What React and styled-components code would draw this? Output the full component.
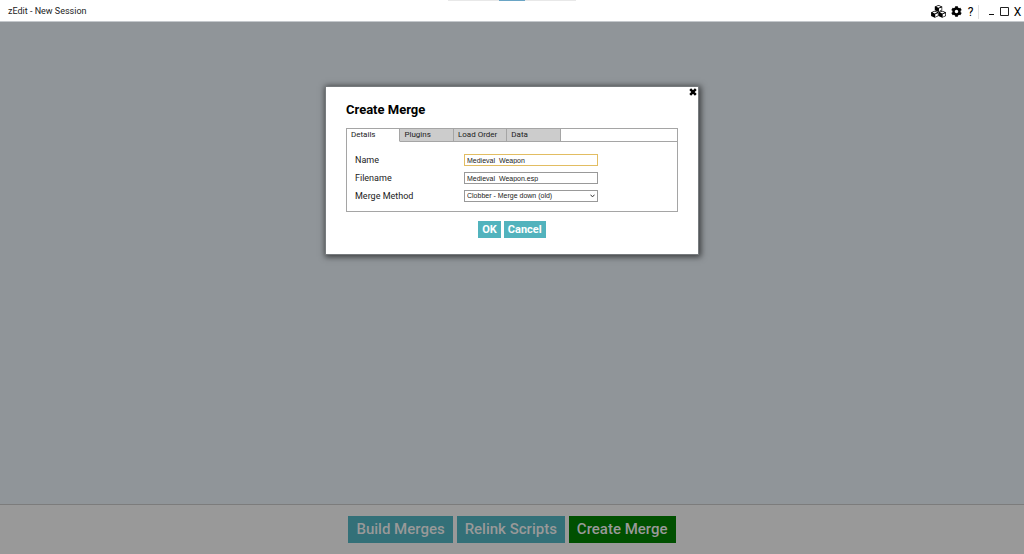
import React from "react";
import styled, { createGlobalStyle, css } from "styled-components";
import { FaCog } from "react-icons/fa";

const GlobalStyle = createGlobalStyle`
  *, *::before, *::after { box-sizing: border-box; }
  body { margin: 0; }
  body, button, input, select { font-family: Roboto, "Liberation Sans", sans-serif; }
`;

const Page = styled.div`
  min-height: 100vh;
  display: flex;
  flex-direction: column;
  background: #909599;
  color: #222;
`;

const TitleBar = styled.header`
  position: relative;
  display: flex;
  align-items: center;
  justify-content: space-between;
  height: 22px;
  padding: 0 0 0 8px;
  background: #fff;
  border-bottom: 1px solid #c4c8cc;
`;

const Title = styled.h1`
  margin: 0;
  font-size: 9px;
  line-height: 12px;
  font-weight: 400;
`;

const ProgressTrack = styled.div`
  position: absolute;
  top: 0;
  left: 50%;
  width: 128px;
  height: 1px;
  margin-left: -64px;
  background: #e8e8e8;
`;

const ProgressFill = styled.div`
  width: 26px;
  height: 1px;
  margin: 0 auto;
  background: #6aa5c5;
`;

const Actions = styled.nav`
  display: flex;
  align-items: center;
  padding-top: 2px;
`;

const IconButton = styled.button`
  display: flex;
  align-items: center;
  justify-content: center;
  width: ${(p) => p.$width || 13}px;
  height: 20px;
  padding: 0;
  border: 0;
  background: none;
  color: #000;
  font-size: 12px;
  line-height: 20px;
`;

const Divider = styled.span`
  width: 1px;
  height: 14px;
  margin: 0 6px 0 1px;
  background: #e2e2e2;
`;

const Workspace = styled.main`
  flex: 1;
  display: flex;
  justify-content: center;
  align-items: flex-start;
  padding: 64px 16px;
`;

const Modal = styled.section`
  position: relative;
  width: 374px;
  padding: 15px 20px 16px;
  background: #fff;
  border: 1px solid #777b7e;
  box-shadow: 1px 1px 6px 1px rgba(0, 0, 0, 0.6);
`;

const CloseButton = styled.button`
  position: absolute;
  top: 0;
  right: 0;
  display: flex;
  align-items: center;
  justify-content: center;
  width: 11px;
  height: 10px;
  padding: 0;
  border: 0;
  background: none;
  color: #000;
`;

const Heading = styled.h2`
  margin: 0 0 10px;
  font-size: 13px;
  line-height: 16px;
  font-weight: 700;
  color: #000;
`;

const TabPanel = styled.div`
  border: 1px solid #a5a5a5;
`;

const TabList = styled.div`
  display: grid;
  grid-template-columns: repeat(4, 16.2%) 1fr;
  height: 13px;
`;

const Tab = styled.button`
  padding: 0 0 0 4px;
  border: 0;
  border-right: 1px solid #a5a5a5;
  border-bottom: 1px solid #a5a5a5;
  background: #ccc;
  color: #222;
  font-size: 8px;
  line-height: 12px;
  text-align: left;
  white-space: nowrap;
  ${(p) =>
    p.$active &&
    css`
      background: #fff;
      border-bottom-color: #fff;
    `}
`;

const TabFiller = styled.div`
  border-bottom: 1px solid #a5a5a5;
`;

const Form = styled.form`
  display: flex;
  flex-direction: column;
  gap: 6px;
  padding: 12px 8px 9px;
`;

const Row = styled.div`
  display: flex;
  align-items: center;
  height: 12px;
`;

const Label = styled.label`
  width: 109px;
  font-size: 9px;
  line-height: 12px;
`;

const field = css`
  width: 134px;
  height: 12px;
  border: 1px solid ${(p) => (p.$focused ? "#e2bd62" : "#999")};
  border-radius: 0;
  outline: 0;
  background: #fff;
  color: #222;
  font-family: "Liberation Sans", sans-serif;
  font-size: 7px;
  line-height: 10px;
`;

const TextInput = styled.input`
  ${field}
  padding: 0 2px;
`;

const SelectWrap = styled.span`
  display: grid;
  align-items: center;
  justify-items: end;
  > * { grid-area: 1 / 1; }
  svg { margin-right: 3px; pointer-events: none; }
`;

const Select = styled.select`
  ${field}
  appearance: none;
  padding: 0 2px;
`;

const ButtonRow = styled.div`
  display: flex;
  justify-content: center;
  gap: 3px;
  margin-top: 9px;
`;

const DialogButton = styled.button`
  height: 17px;
  padding: 0 4px;
  border: 0;
  background: #52b3bd;
  color: #fff;
  font-size: 11px;
  line-height: 17px;
  font-weight: 700;
`;

const Footer = styled.footer`
  display: flex;
  justify-content: center;
  gap: 4px;
  padding: 11px 0;
  background: #999;
  border-top: 1px solid #7c7c7c;
`;

const FooterButton = styled.button`
  height: 27px;
  padding: 0 8px;
  border: 0;
  background: ${(p) => (p.$primary ? "#005000" : "#337078")};
  color: #999;
  font-size: 15px;
  line-height: 27px;
  font-weight: 500;
`;

const Cube = ({ x, y }) => (
  <g transform={`translate(${x} ${y})`}>
    <path d="M4 0 8 1.6V5.6L4 7.6 0 5.6V1.6Z" fill="#000" />
    <path d="M4 .8 6.5 1.8 4 2.9 1.5 1.8Z" fill="#fff" />
    <path d="M4.5 3.8 7.3 2.6V5.2L4.5 6.6Z" fill="#fff" />
  </g>
);

const CubesIcon = () => (
  <svg width="15" height="13" viewBox="0 0 16 14" aria-hidden="true">
    <Cube x={4} y={0} />
    <Cube x={0} y={6.2} />
    <Cube x={8} y={6.2} />
  </svg>
);

const CrossIcon = () => (
  <svg width="8" height="8" viewBox="0 0 8 8" aria-hidden="true">
    <path d="M1.2 1.2 6.8 6.8M6.8 1.2 1.2 6.8" stroke="#000" strokeWidth="2.5" />
  </svg>
);

const tabs = ["Details", "Plugins", "Load Order", "Data"];

export default function App() {
  return (
    <>
      <GlobalStyle />
      <Page>
        <TitleBar>
          <Title>zEdit - New Session</Title>
          <ProgressTrack>
            <ProgressFill />
          </ProgressTrack>
          <Actions aria-label="Window">
            <IconButton $width={20} aria-label="Merges"><CubesIcon /></IconButton>
            <IconButton $width={16} aria-label="Settings"><FaCog size={11} /></IconButton>
            <IconButton aria-label="Help">?</IconButton>
            <Divider />
            <IconButton aria-label="Minimize">
              <svg width="7" height="12" aria-hidden="true"><path d="M1 8.5H6" stroke="#111" /></svg>
            </IconButton>
            <IconButton aria-label="Maximize">
              <svg width="9" height="9" aria-hidden="true"><path d="M.5.5H8.5V8.5H.5Z" fill="none" stroke="#222" /></svg>
            </IconButton>
            <IconButton aria-label="Close">X</IconButton>
          </Actions>
        </TitleBar>
        <Workspace>
          <Modal role="dialog" aria-labelledby="dialog-title">
            <CloseButton aria-label="Close dialog"><CrossIcon /></CloseButton>
            <Heading id="dialog-title">Create Merge</Heading>
            <TabPanel>
              <TabList role="tablist">
                {tabs.map((name, i) => (
                  <Tab key={name} role="tab" aria-selected={i === 0} $active={i === 0}>{name}</Tab>
                ))}
                <TabFiller />
              </TabList>
              <Form>
                <Row>
                  <Label htmlFor="name">Name</Label>
                  <TextInput id="name" $focused defaultValue="Medieval_Weapon" />
                </Row>
                <Row>
                  <Label htmlFor="filename">Filename</Label>
                  <TextInput id="filename" defaultValue="Medieval_Weapon.esp" />
                </Row>
                <Row>
                  <Label htmlFor="method">Merge Method</Label>
                  <SelectWrap>
                    <Select id="method">
                      <option>Clobber - Merge down (old)</option>
                    </Select>
                    <svg width="5" height="4" aria-hidden="true"><path d="M.5.7 2.5 2.9 4.5.7" fill="none" stroke="#333" /></svg>
                  </SelectWrap>
                </Row>
              </Form>
            </TabPanel>
            <ButtonRow>
              <DialogButton>OK</DialogButton>
              <DialogButton>Cancel</DialogButton>
            </ButtonRow>
          </Modal>
        </Workspace>
        <Footer>
          <FooterButton>Build Merges</FooterButton>
          <FooterButton>Relink Scripts</FooterButton>
          <FooterButton $primary>Create Merge</FooterButton>
        </Footer>
      </Page>
    </>
  );
}
